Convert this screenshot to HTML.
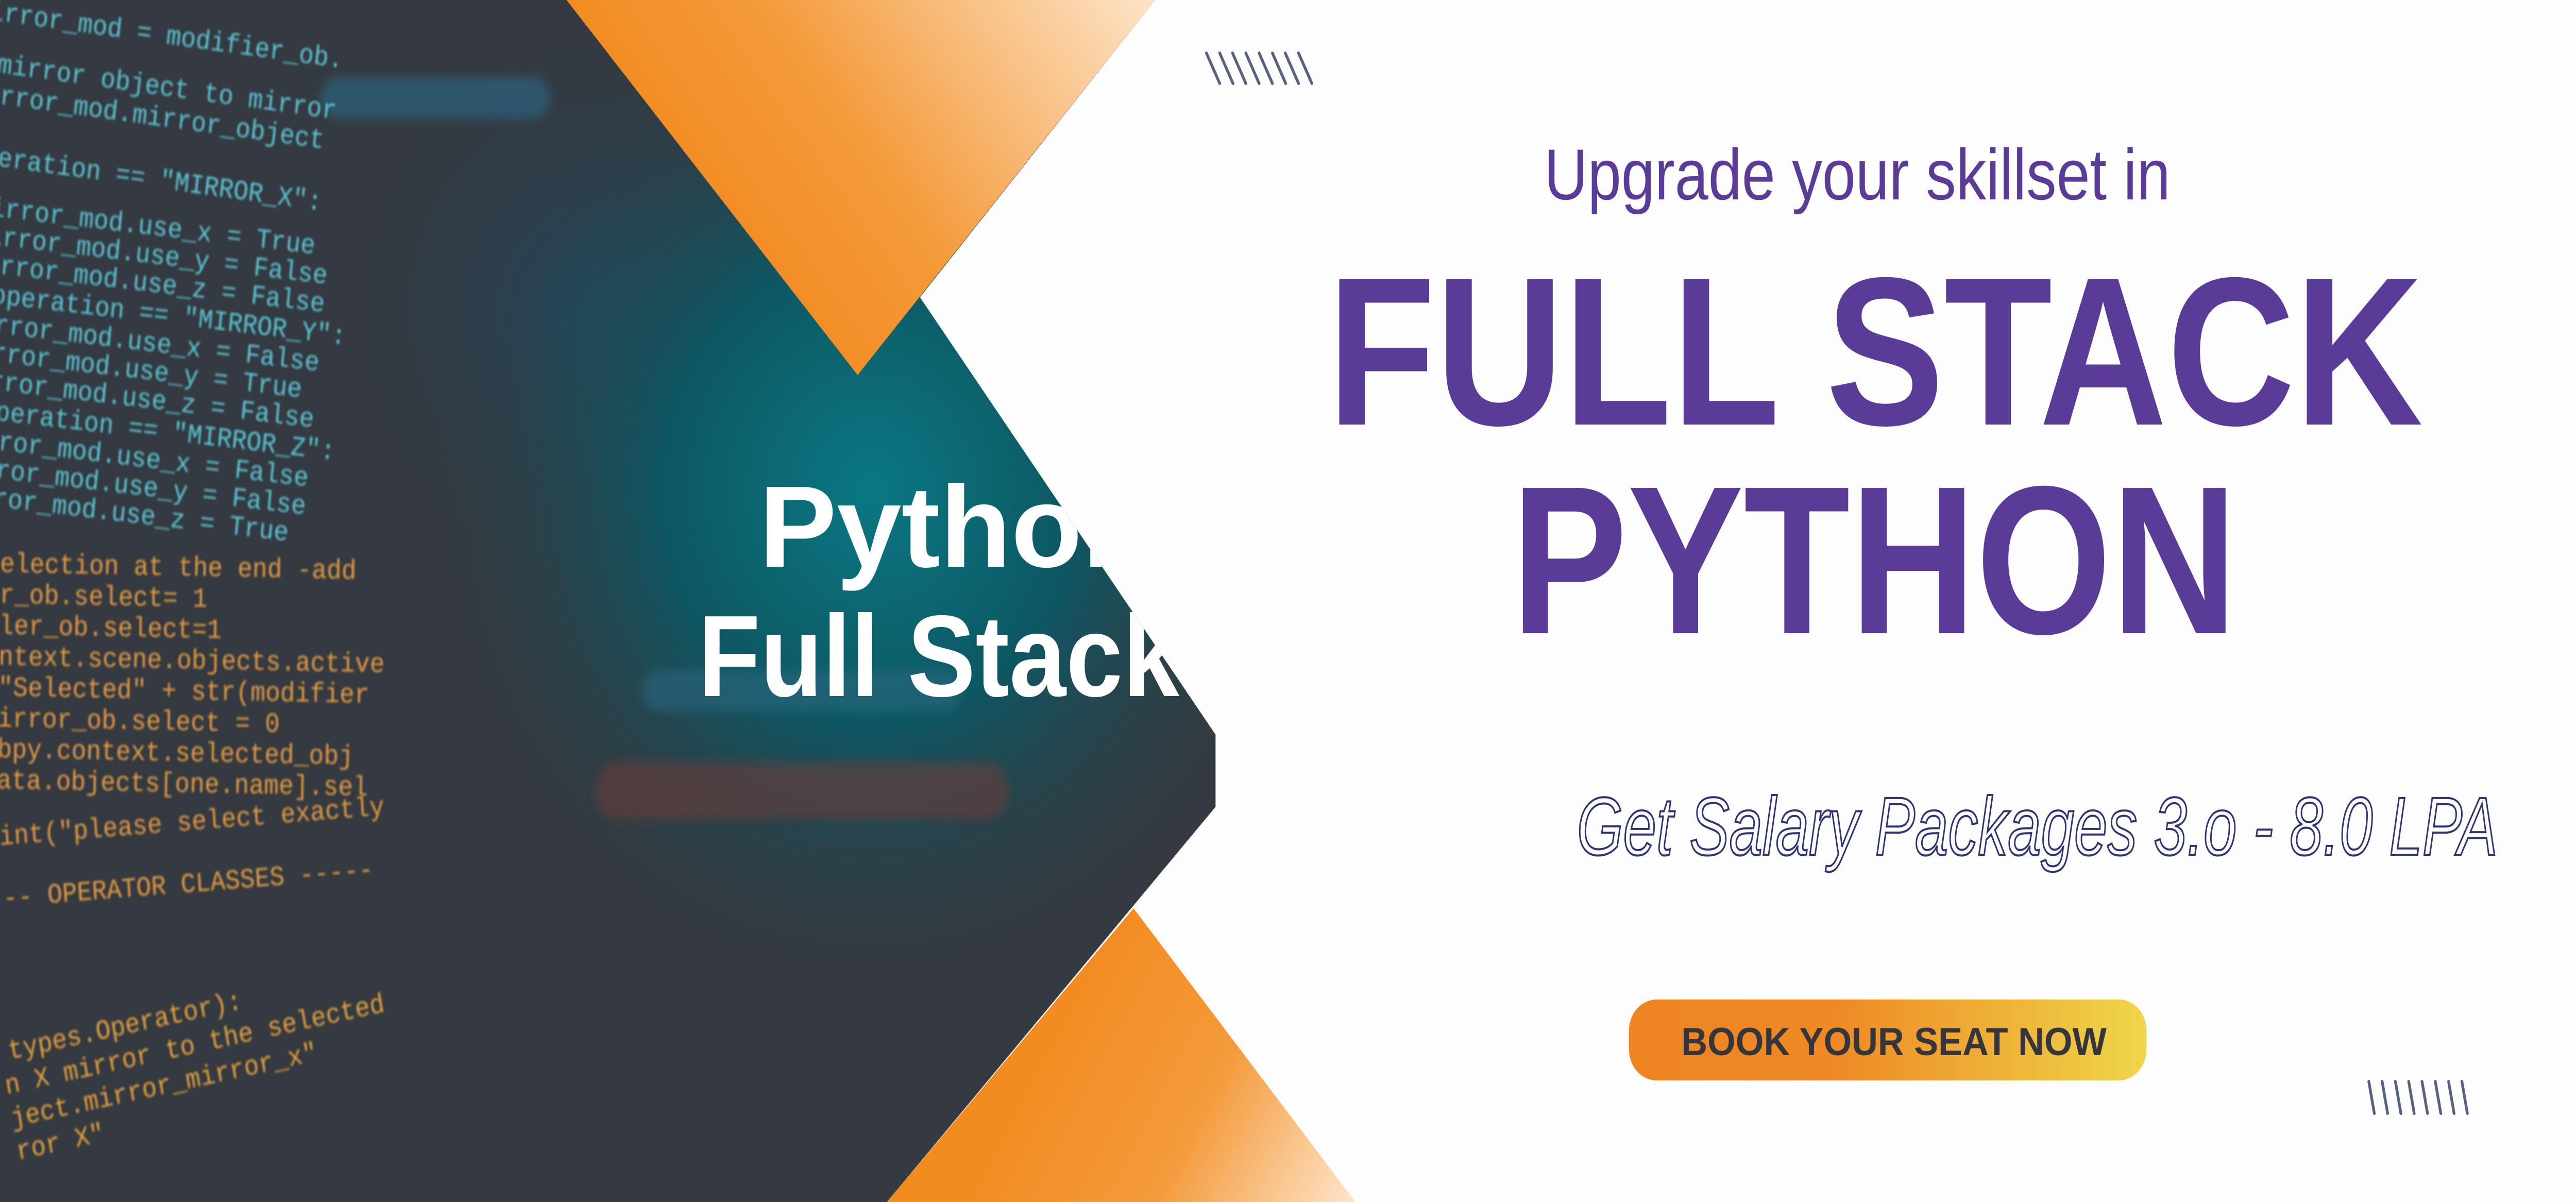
<!DOCTYPE html>
<html><head><meta charset="utf-8"><style>
html,body{margin:0;padding:0;background:#fdfdfe;width:100%;height:100%;overflow:hidden;}
svg{display:block;width:100vw;height:100vh;}
</style></head><body>
<svg viewBox="0 0 5620 2333" preserveAspectRatio="none" xmlns="http://www.w3.org/2000/svg">
<defs>
<clipPath id="photo"><polygon points="0,0 2520,0 2007,577 2652,1426 2652,1566 1935,2333 0,2333"/></clipPath>
<radialGradient id="teal" cx="1900" cy="950" r="1000" gradientUnits="userSpaceOnUse">
<stop offset="0" stop-color="#0a7882"/><stop offset="0.45" stop-color="#0d5763"/><stop offset="1" stop-color="#343a40" stop-opacity="0"/>
</radialGradient>
<radialGradient id="blue" cx="1300" cy="600" r="600" gradientUnits="userSpaceOnUse">
<stop offset="0" stop-color="#1d4a6a" stop-opacity="0.8"/><stop offset="1" stop-color="#343a40" stop-opacity="0"/>
</radialGradient>
<linearGradient id="tg" x1="1700" y1="650" x2="2520" y2="0" gradientUnits="userSpaceOnUse">
<stop offset="0" stop-color="#f28b20"/><stop offset="0.35" stop-color="#f49a3a"/><stop offset="1" stop-color="#fde4c8"/>
</linearGradient>
<linearGradient id="bg2" x1="2300" y1="1950" x2="2950" y2="2333" gradientUnits="userSpaceOnUse">
<stop offset="0" stop-color="#f28b20"/><stop offset="0.5" stop-color="#f49a3a"/><stop offset="1" stop-color="#fde4c8"/>
</linearGradient>
<linearGradient id="btn" x1="0" y1="0" x2="1" y2="0">
<stop offset="0" stop-color="#ee8422"/><stop offset="0.4" stop-color="#ee8a24"/><stop offset="1" stop-color="#efd64a"/>
</linearGradient>
<filter id="bl" x="-10%" y="-10%" width="120%" height="120%"><feGaussianBlur stdDeviation="2"/></filter>
<filter id="bl2" x="-10%" y="-10%" width="120%" height="120%"><feGaussianBlur stdDeviation="10"/></filter>
</defs>
<rect width="5620" height="2333" fill="#fdfdfe"/>
<g clip-path="url(#photo)">
<rect width="2700" height="2333" fill="#343a40"/>
<rect width="2700" height="2333" fill="url(#blue)"/>
<rect width="2700" height="2333" fill="url(#teal)"/>
<g filter="url(#bl2)" opacity="0.6">
<rect x="1300" y="1480" width="900" height="110" rx="50" fill="#6a3d3a"/>
<rect x="1400" y="1300" width="700" height="80" rx="40" fill="#2a6680"/>
<rect x="700" y="150" width="500" height="80" rx="40" fill="#2a6a8a"/>
</g>
<g font-family="Liberation Mono, DejaVu Sans Mono, monospace" font-size="54" filter="url(#bl)">
<g fill="#5cc4d4" transform="rotate(7 0 0)">
<text x="-20" y="40">irror_mod = modifier_ob.</text>
<text x="10" y="140">mirror object to mirror</text>
<text x="-10" y="200">irror_mod.mirror_object</text>
<text x="0" y="320">peration == "MIRROR_X":</text>
</g>
<g fill="#5cc4d4" transform="rotate(6 0 300)">
<text x="-10" y="420">irror_mod.use_x = True</text>
<text x="-10" y="475">irror_mod.use_y = False</text>
<text x="-10" y="530">irror_mod.use_z = False</text>
<text x="10" y="588">operation == "MIRROR_Y":</text>
<text x="-10" y="645">irror_mod.use_x = False</text>
<text x="-10" y="700">irror_mod.use_y = True</text>
<text x="-10" y="755">irror_mod.use_z = False</text>
<text x="10" y="813">operation == "MIRROR_Z":</text>
<text x="-10" y="870">irror_mod.use_x = False</text>
<text x="-10" y="925">irror_mod.use_y = False</text>
<text x="-10" y="980">irror_mod.use_z = True</text>
</g>
<g fill="#e39a45" transform="rotate(1 0 1100)">
<text x="0" y="1110">election at the end -add</text>
<text x="0" y="1170">r_ob.select= 1</text>
<text x="0" y="1230">ler_ob.select=1</text>
<text x="0" y="1290">ntext.scene.objects.active</text>
<text x="0" y="1350">"Selected" + str(modifier</text>
<text x="0" y="1410">irror_ob.select = 0</text>
<text x="0" y="1470">bpy.context.selected_obj</text>
<text x="0" y="1530">ata.objects[one.name].sel</text>
</g>
<g fill="#e39a45" transform="rotate(-4 0 1650)">
<text x="0" y="1640">int("please select exactly</text>
<text x="0" y="1760">-- OPERATOR CLASSES -----</text>
</g>
<g fill="#e3a040" transform="rotate(-11 0 2050)">
<text x="20" y="2060">types.Operator):</text>
<text x="0" y="2125">n X mirror to the selected</text>
<text x="0" y="2190">ject.mirror_mirror_x"</text>
<text x="0" y="2255">ror X"</text>
</g>
</g>
<g font-family="Liberation Sans, DejaVu Sans, sans-serif" font-weight="bold" fill="#ffffff" font-size="225">
<text x="1656" y="1100" textLength="860" lengthAdjust="spacingAndGlyphs">Python</text>
<text x="1523" y="1351" textLength="1050" lengthAdjust="spacingAndGlyphs">Full Stack</text>
</g>
</g>
<polygon points="1236,0 2520,0 1871,728" fill="url(#tg)"/>
<polygon points="1935,2333 2957,2333 2473,1763" fill="url(#bg2)"/>
<g stroke="#56627f" stroke-width="6" stroke-linecap="round">
<line x1="2632" y1="103" x2="2661" y2="162"/><line x1="2661" y1="103" x2="2690" y2="162"/>
<line x1="2689" y1="103" x2="2718" y2="162"/><line x1="2718" y1="103" x2="2747" y2="162"/>
<line x1="2747" y1="103" x2="2776" y2="162"/><line x1="2776" y1="103" x2="2805" y2="162"/>
<line x1="2804" y1="103" x2="2833" y2="162"/><line x1="2833" y1="103" x2="2862" y2="162"/>
<line x1="5168" y1="2099" x2="5180" y2="2161"/><line x1="5197" y1="2099" x2="5209" y2="2161"/>
<line x1="5226" y1="2099" x2="5238" y2="2161"/><line x1="5255" y1="2099" x2="5267" y2="2161"/>
<line x1="5284" y1="2099" x2="5296" y2="2161"/><line x1="5313" y1="2099" x2="5325" y2="2161"/>
<line x1="5342" y1="2099" x2="5354" y2="2161"/><line x1="5371" y1="2099" x2="5383" y2="2161"/>
</g>
<g font-family="Liberation Sans, Arial, sans-serif" fill="#5a3b97">
<text x="3369" y="387" font-size="140" textLength="1366" lengthAdjust="spacingAndGlyphs">Upgrade your skillset in</text>
<text x="2896" y="824" font-size="410" font-weight="bold" textLength="2390" lengthAdjust="spacingAndGlyphs">FULL STACK</text>
<text x="3297" y="1229" font-size="410" font-weight="bold" textLength="1584" lengthAdjust="spacingAndGlyphs">PYTHON</text>
</g>
<text x="3440" y="1659" font-family="Liberation Sans, sans-serif" font-style="italic" font-size="160" fill="none" stroke="#2e3470" stroke-width="4" textLength="2009" lengthAdjust="spacingAndGlyphs">Get Salary Packages 3.o - 8.0 LPA</text>
<rect x="3554" y="1940" width="1129" height="157" rx="60" fill="url(#btn)"/>
<text x="3668" y="2048" font-family="Liberation Sans, Arial, sans-serif" font-weight="bold" font-size="76" fill="#35353b" textLength="928" lengthAdjust="spacingAndGlyphs">BOOK YOUR SEAT NOW</text>
</svg>
</body></html>
